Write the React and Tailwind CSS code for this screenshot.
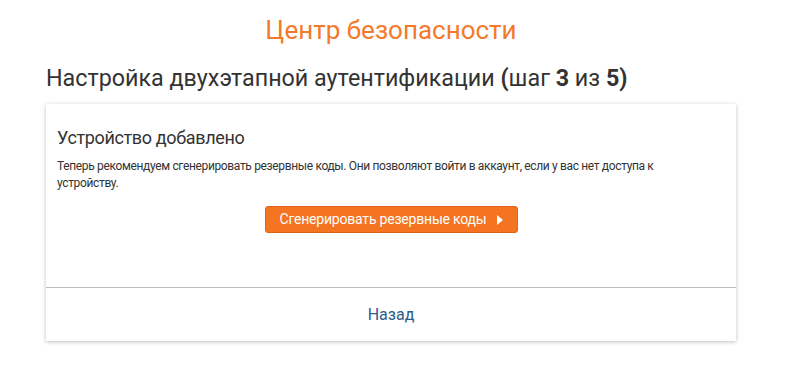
import React from "react";

const App = () => {
  return (
    <div className="min-h-screen bg-white font-['Roboto',sans-serif] text-[#333]">
      <div className="px-[46px] pt-[13px] w-[782px]">
        {/* Page title */}
        <h1 className="text-center text-[26px] leading-[34px] text-[#f47a2b]">Центр безопасности</h1>

        <h2 className="mt-[16px] text-[23.3px] leading-[30px] text-[#333]">
          Настройка двухэтапной аутентификации <span className="font-bold">(</span>шаг{" "}
          <span className="font-bold">3</span> из <span className="font-bold">5)</span>
        </h2>

        {/* Card */}
        <div className="mt-[11px] bg-white shadow-[0_1px_4px_rgba(0,0,0,0.25)]">
          <div className="px-[11px] pt-[22px] pb-[54px]">
            <h3 className="text-[18px] leading-[24px] tracking-[-0.35px] text-[#333]">Устройство добавлено</h3>
            <p className="mt-[8px] pr-[50px] text-[12px] leading-[17px] tracking-[-0.35px] text-[#333]">
              Теперь рекомендуем сгенерировать резервные коды. Они позволяют войти в аккаунт, если у вас нет доступа к устройству.
            </p>
            <div className="mt-[14px] flex justify-center">
              <button className="flex h-[27px] w-[253px] items-center justify-center gap-[10px] rounded-[3px] border border-[#dc6414] bg-[#f47421] text-[14px] tracking-[-0.2px] text-white">
                Сгенерировать резервные коды
                <svg width="6" height="10" viewBox="0 0 6 10">
                  <path d="M0 0 L6 5 L0 10 Z" fill="white" />
                </svg>
              </button>
            </div>
          </div>
          <div className="border-t border-[#bbb] h-[54px] flex items-center justify-center text-[16px] text-[#2b5d8a]">
            Назад
          </div>
        </div>
      </div>
    </div>
  );
};

export default App;
